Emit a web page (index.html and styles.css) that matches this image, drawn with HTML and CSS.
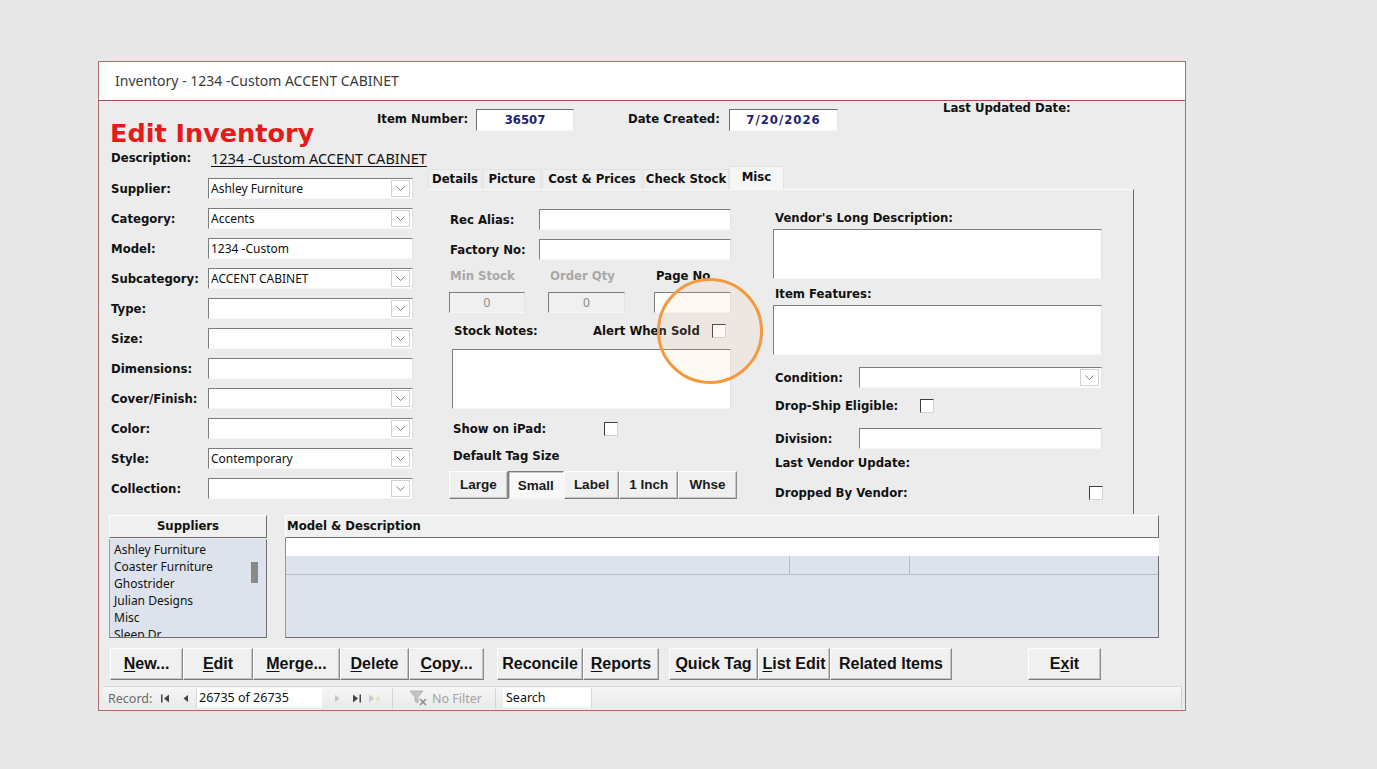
FILE: index.html
```html
<!DOCTYPE html>
<html lang="en">
<head>
  <meta charset="UTF-8" />
  <title>Inventory - 1234 -Custom ACCENT CABINET</title>
  <link rel="stylesheet" href="styles.css">
</head>
<body>
<div class="window">
  <div class="titlebar">Inventory - 1234 -Custom ACCENT CABINET</div>

  <div class="form">
    <div class="head">
      <h1 class="form-title">Edit Inventory</h1>
      <div class="head-field">
        <span class="lbl item-lbl">Item Number:</span>
        <span class="stamp item-box">36507</span>
      </div>
      <div class="head-field date-field">
        <span class="lbl date-lbl">Date Created:</span>
        <span class="stamp date-box">7/20/2026</span>
      </div>
      <div class="lbl updated">Last Updated Date:</div>
    </div>

    <div class="desc-row">
      <span class="lbl side-lbl">Description:</span>
      <span class="desc-val">1234 -Custom ACCENT CABINET</span>
    </div>

    <div class="main">
      <!-- left field column -->
      <div class="fields">
        <div class="field"><span class="lbl side-lbl">Supplier:</span><div class="input combo"><span>Ashley Furniture</span><span class="drop"><svg width="9" height="5" viewBox="0 0 9 5"><path d="M0.5 0.5 L4.5 4.5 L8.5 0.5" fill="none" stroke="#808080"/></svg></span></div></div>
        <div class="field"><span class="lbl side-lbl">Category:</span><div class="input combo"><span>Accents</span><span class="drop"><svg width="9" height="5" viewBox="0 0 9 5"><path d="M0.5 0.5 L4.5 4.5 L8.5 0.5" fill="none" stroke="#808080"/></svg></span></div></div>
        <div class="field"><span class="lbl side-lbl">Model:</span><div class="input">1234 -Custom</div></div>
        <div class="field"><span class="lbl side-lbl">Subcategory:</span><div class="input combo"><span>ACCENT CABINET</span><span class="drop"><svg width="9" height="5" viewBox="0 0 9 5"><path d="M0.5 0.5 L4.5 4.5 L8.5 0.5" fill="none" stroke="#808080"/></svg></span></div></div>
        <div class="field"><span class="lbl side-lbl">Type:</span><div class="input combo"><span></span><span class="drop"><svg width="9" height="5" viewBox="0 0 9 5"><path d="M0.5 0.5 L4.5 4.5 L8.5 0.5" fill="none" stroke="#808080"/></svg></span></div></div>
        <div class="field"><span class="lbl side-lbl">Size:</span><div class="input combo"><span></span><span class="drop"><svg width="9" height="5" viewBox="0 0 9 5"><path d="M0.5 0.5 L4.5 4.5 L8.5 0.5" fill="none" stroke="#808080"/></svg></span></div></div>
        <div class="field"><span class="lbl side-lbl">Dimensions:</span><div class="input"></div></div>
        <div class="field"><span class="lbl side-lbl">Cover/Finish:</span><div class="input combo"><span></span><span class="drop"><svg width="9" height="5" viewBox="0 0 9 5"><path d="M0.5 0.5 L4.5 4.5 L8.5 0.5" fill="none" stroke="#808080"/></svg></span></div></div>
        <div class="field"><span class="lbl side-lbl">Color:</span><div class="input combo"><span></span><span class="drop"><svg width="9" height="5" viewBox="0 0 9 5"><path d="M0.5 0.5 L4.5 4.5 L8.5 0.5" fill="none" stroke="#808080"/></svg></span></div></div>
        <div class="field"><span class="lbl side-lbl">Style:</span><div class="input combo"><span>Contemporary</span><span class="drop"><svg width="9" height="5" viewBox="0 0 9 5"><path d="M0.5 0.5 L4.5 4.5 L8.5 0.5" fill="none" stroke="#808080"/></svg></span></div></div>
        <div class="field"><span class="lbl side-lbl">Collection:</span><div class="input combo"><span></span><span class="drop"><svg width="9" height="5" viewBox="0 0 9 5"><path d="M0.5 0.5 L4.5 4.5 L8.5 0.5" fill="none" stroke="#808080"/></svg></span></div></div>
      </div>

      <!-- tab control -->
      <div class="tabs">
        <div class="tab-strip">
          <span class="tab t-details">Details</span>
          <span class="tab t-picture">Picture</span>
          <span class="tab t-cost">Cost &amp; Prices</span>
          <span class="tab t-stock">Check Stock</span>
          <span class="tab t-misc on">Misc</span>
        </div>
        <div class="tab-panel">
          <div class="col-left">
            <div class="prow"><span class="lbl plbl">Rec Alias:</span><div class="input wide"></div></div>
            <div class="prow factory"><span class="lbl plbl">Factory No:</span><div class="input wide"></div></div>
            <div class="trio trio-lbls">
              <span class="lbl muted c1">Min Stock</span>
              <span class="lbl muted c2">Order Qty</span>
              <span class="lbl c3">Page No</span>
            </div>
            <div class="trio trio-inputs">
              <div class="input small off">0</div>
              <div class="input small off">0</div>
              <div class="input small"></div>
            </div>
            <div class="notes-head">
              <span class="lbl notes-lbl">Stock Notes:</span>
              <span class="lbl alert-lbl">Alert When Sold</span>
              <span class="check"></span>
            </div>
            <div class="input memo notes"></div>
            <div class="ipad-row">
              <span class="lbl ipad-lbl">Show on iPad:</span>
              <span class="check"></span>
            </div>
            <div class="lbl tag-title">Default Tag Size</div>
            <div class="tag-group">
              <span class="tag-btn w59">Large</span>
              <span class="tag-btn w56 pressed">Small</span>
              <span class="tag-btn w56">Label</span>
              <span class="tag-btn w59">1 Inch</span>
              <span class="tag-btn w59">Whse</span>
            </div>
          </div>

          <div class="col-right">
            <div class="lbl rlbl">Vendor's Long Description:</div>
            <div class="input memo rmemo"></div>
            <div class="lbl rlbl features">Item Features:</div>
            <div class="input memo rmemo"></div>
            <div class="rrow condition"><span class="lbl rside">Condition:</span><div class="input combo rinput"><span></span><span class="drop"><svg width="9" height="5" viewBox="0 0 9 5"><path d="M0.5 0.5 L4.5 4.5 L8.5 0.5" fill="none" stroke="#808080"/></svg></span></div></div>
            <div class="rrow check-row dropship"><span class="lbl ship-lbl">Drop-Ship Eligible:</span><span class="check"></span></div>
            <div class="rrow division"><span class="lbl rside">Division:</span><div class="input rinput"></div></div>
            <div class="lbl rlbl vendor-upd">Last Vendor Update:</div>
            <div class="rrow check-row dropped"><span class="lbl">Dropped By Vendor:</span><span class="check"></span></div>
          </div>
        </div>
      </div>
    </div>

    <div class="lists">
      <div class="suppliers">
        <div class="sub-head">Suppliers</div>
        <div class="listbox">
          <ul class="list-items">
            <li>Ashley Furniture</li>
            <li>Coaster Furniture</li>
            <li>Ghostrider</li>
            <li>Julian Designs</li>
            <li>Misc</li>
            <li>Sleep Dr</li>
          </ul>
          <div class="vscroll"><span class="thumb"></span></div>
        </div>
      </div>
      <div class="models">
        <div class="sub-head left">Model &amp; Description</div>
        <div class="find-row"></div>
        <div class="grid">
          <div class="grid-head">
            <span class="gcol g1"></span>
            <span class="gcol g2"></span>
            <span class="gcol g3"></span>
          </div>
        </div>
      </div>
    </div>

    <div class="actions">
      <span class="btn b-new"><u>N</u>ew...</span>
      <span class="btn b-edit"><u>E</u>dit</span>
      <span class="btn b-merge"><u>M</u>erge...</span>
      <span class="btn b-delete"><u>D</u>elete</span>
      <span class="btn b-copy"><u>C</u>opy...</span>
      <span class="btn b-reconcile">Reconcile</span>
      <span class="btn b-reports"><u>R</u>eports</span>
      <span class="btn b-quick"><u>Q</u>uick Tag</span>
      <span class="btn b-list"><u>L</u>ist Edit</span>
      <span class="btn b-related">Related Items</span>
      <span class="btn b-exit">E<u>x</u>it</span>
    </div>
  </div>

  <div class="navbar">
    <span class="nav-lbl">Record:</span>
    <svg class="nav-first" width="10" height="9" viewBox="0 0 10 9"><rect x="0" y="0.5" width="1.5" height="8" fill="#444"/><path d="M8 0.5 L3 4.5 L8 8.5 Z" fill="#444"/></svg>
    <svg class="nav-prev" width="7" height="9" viewBox="0 0 7 9"><path d="M6 1 L1.5 4.5 L6 8 Z" fill="#444"/></svg>
    <span class="nav-box">26735 of 26735</span>
    <svg class="nav-next" width="7" height="9" viewBox="0 0 7 9"><path d="M1 1 L5.5 4.5 L1 8 Z" fill="#c2c2c2"/></svg>
    <svg class="nav-last" width="10" height="9" viewBox="0 0 10 9"><path d="M1 0.5 L6 4.5 L1 8.5 Z" fill="#444"/><rect x="7.5" y="0.5" width="1.5" height="8" fill="#444"/></svg>
    <svg class="nav-new" width="13" height="9" viewBox="0 0 13 9"><path d="M1 0.5 L6 4.5 L1 8.5 Z" fill="#c8c8c8"/><path d="M10 2 L10.7 3.8 L12.5 4 L11.1 5.1 L11.6 7 L10 6 L8.4 7 L8.9 5.1 L7.5 4 L9.3 3.8 Z" fill="#e6d8a8"/></svg>
    <span class="nav-sep"></span>
    <svg class="nav-filter-ico" width="20" height="16" viewBox="0 0 20 16"><path d="M1 1 H14 L9 7 V13 L6 11 V7 Z" fill="#c4c4c4" stroke="#a8a8a8" stroke-width="0.8"/><path d="M11 9 L17 15 M17 9 L11 15" stroke="#8a8a8a" stroke-width="1.6"/></svg>
    <span class="nav-filter">No Filter</span>
    <span class="nav-sep second"></span>
    <span class="nav-search">Search</span>
  </div>

  <div class="highlight"></div>
</div>
</body>
</html>
```

FILE: styles.css
```css
* { box-sizing: border-box; }

body {
  margin: 0;
  background: #e8e8e8;
  font-family: "DejaVu Sans", Verdana, sans-serif;
  color: #111;
}

.window {
  position: relative;
  width: 1088px;
  height: 650px;
  margin: 61px 0 0 98px;
  border: 1px solid #b06a6a;
  background: #ececec;
}

.titlebar {
  height: 39px;
  padding-left: 16px;
  line-height: 38px;
  background: #fff;
  border-bottom: 1px solid #a55252;
  font-family: "Noto Sans", "Open Sans", sans-serif;
  font-size: 14px;
  color: #3a3a3a;
}

.form {
  height: 585px;
  padding-left: 10px;
}

.lbl {
  font-weight: bold;
  font-size: 11.7px;
  white-space: nowrap;
  color: #111;
}
.lbl.muted { color: #a8a8a8; }

/* header */
.head {
  display: flex;
  align-items: flex-start;
  height: 49px;
}
.form-title {
  width: 267px;
  margin: 17px 0 0 1px;
  font-size: 25.5px;
  line-height: 30px;
  font-weight: bold;
  color: #e41b1b;
}
.head-field {
  display: flex;
  margin-top: 8px;
}
.head-field .lbl { line-height: 20px; }
.item-lbl { width: 99px; }
.date-field { margin-left: 54px; }
.date-lbl { width: 101px; }
.stamp {
  height: 22px;
  background: #fff;
  border: 1px solid;
  border-color: #6f6f6f #e4e4e4 #f6f6f6 #6f6f6f;
  text-align: center;
  font-weight: bold;
  font-size: 11.7px;
  line-height: 20px;
  color: #1c1f78;
}
.item-box { width: 98px; }
.date-box { width: 109px; letter-spacing: 1px; }
.updated {
  margin-left: 105px;
  line-height: 14px;
}

.desc-row {
  display: flex;
  align-items: center;
  height: 16px;
}
.side-lbl {
  width: 99px;
  padding-left: 2px;
}
.desc-val {
  padding-left: 3px;
  font-family: "Noto Sans", sans-serif;
  font-size: 14.5px;
  line-height: 16px;
  text-decoration: underline;
  text-underline-offset: 2px;
}

/* main area */
.main {
  display: flex;
  height: 348px;
}
.fields {
  width: 319px;
  padding-top: 12px;
  display: flex;
  flex-direction: column;
  gap: 9px;
}
.field {
  display: flex;
  align-items: center;
  height: 21px;
}

.input {
  width: 205px;
  height: 21px;
  padding-left: 2px;
  background: #fff;
  border: 1px solid;
  border-color: #7d7d7d #e2e2e2 #f7f7f7 #7d7d7d;
  font-family: "Noto Sans", sans-serif;
  font-size: 12px;
  line-height: 19px;
  color: #111;
  white-space: nowrap;
}
.combo {
  display: flex;
  justify-content: space-between;
  align-items: center;
}
.drop {
  width: 19px;
  height: 17px;
  margin-right: 2px;
  border: 1px solid #d2d2d2;
  background: #fff;
  display: flex;
  align-items: center;
  justify-content: center;
}

.check {
  width: 14px;
  height: 14px;
  background: #fff;
  border: 1px solid;
  border-color: #3c3c3c #d4d4d4 #d4d4d4 #3c3c3c;
}

/* tabs */
.tabs {
  width: 706px;
  display: flex;
  flex-direction: column;
}
.tab-strip {
  height: 23px;
  display: flex;
  align-items: flex-end;
  gap: 1px;
}
.tab {
  height: 20px;
  line-height: 19px;
  text-align: center;
  font-weight: bold;
  font-size: 11.7px;
  white-space: nowrap;
  background: #efefef;
  border: 1px solid #e3e3e3;
  border-bottom: none;
}
.tab.on {
  height: 23px;
  line-height: 20px;
  background: #f6f6f6;
}
.t-details { width: 54px; }
.t-picture { width: 58px; }
.t-cost { width: 100px; }
.t-stock { width: 86px; }
.t-misc { width: 55px; margin-left: -1px; }

.tab-panel {
  height: 325px;
  display: flex;
  padding-left: 21px;
  border-top: 1px solid #fbfbfb;
  border-right: 1px solid #6e6e6e;
}

.col-left {
  width: 288px;
  padding-top: 19px;
  display: flex;
  flex-direction: column;
}
.prow {
  display: flex;
  align-items: center;
  height: 21px;
}
.prow.factory { margin-top: 9px; }
.plbl { width: 90px; padding-left: 1px; }
.input.wide { width: 192px; }

.trio { display: flex; }
.trio-lbls {
  margin-top: 8px;
  height: 16px;
  line-height: 16px;
}
.trio-lbls .c1 { width: 99px; padding-left: 1px; }
.trio-lbls .c2 { width: 106px; padding-left: 2px; }
.trio-lbls .c3 { padding-left: 2px; }
.trio-inputs { margin-top: 8px; }
.input.small { width: 76px; text-align: center; padding-left: 0; }
.trio-inputs .input:nth-child(1) { margin-right: 23px; }
.trio-inputs .input:nth-child(2) { width: 77px; margin-right: 29px; }
.trio-inputs .input:nth-child(3) { width: 77px; }
.input.off { background: #f0f0f0; color: #8a8a8a; }

.notes-head {
  display: flex;
  align-items: center;
  height: 18px;
  margin-top: 9px;
}
.notes-lbl { width: 144px; padding-left: 5px; }
.alert-lbl { width: 119px; }

.input.memo { height: 60px; }
.notes { width: 279px; margin: 9px 0 0 3px; }

.ipad-row {
  display: flex;
  align-items: center;
  height: 18px;
  margin-top: 11px;
}
.ipad-lbl { width: 155px; padding-left: 4px; }
.tag-title {
  margin-top: 10px;
  height: 16px;
  line-height: 16px;
  padding-left: 4px;
}

.tag-group {
  display: flex;
  margin-top: 7px;
  height: 28px;
}
.tag-btn {
  height: 28px;
  text-align: center;
  line-height: 25px;
  font-family: "Liberation Sans", Arial, sans-serif;
  font-weight: bold;
  font-size: 13.5px;
  color: #1a1a1a;
  background: #f0f0f0;
  border: 1px solid;
  border-color: #fdfdfd #8c8c8c #7c7c7c #fdfdfd;
  box-shadow: inset -1px -1px 0 #c6c6c6;
}
.tag-btn.pressed {
  background: #f8f8f8;
  border-color: #7c7c7c #f4f4f4 #f4f4f4 #7c7c7c;
  box-shadow: inset 1px 1px 0 #c6c6c6;
  line-height: 28px;
}
.w56 { width: 56px; }
.w59 { width: 59px; }

.col-right {
  width: 330px;
  margin-left: 36px;
  padding-top: 20px;
  display: flex;
  flex-direction: column;
}
.rlbl {
  height: 16px;
  line-height: 16px;
  padding-left: 2px;
}
.rlbl.features { margin-top: 7px; }
.input.rmemo { width: 329px; height: 50px; margin-top: 3px; }
.rrow {
  display: flex;
  align-items: center;
  height: 21px;
}
.rrow .lbl { padding-left: 2px; }
.rside { width: 86px; }
.input.rinput { width: 243px; }
.rrow.condition { margin-top: 12px; }
.rrow.check-row { height: 18px; }
.rrow.dropship { margin-top: 9px; }
.ship-lbl { width: 147px; }
.rrow.division { margin-top: 13px; }
.rlbl.vendor-upd { margin-top: 6px; }
.rrow.dropped {
  margin-top: 13px;
  width: 330px;
  justify-content: space-between;
}

/* supplier list + model grid */
.lists {
  display: flex;
  gap: 18px;
  margin-top: 1px;
}
.suppliers { width: 158px; }
.models { width: 874px; }
.sub-head {
  height: 23px;
  background: #f0f0f0;
  border: 1px solid;
  border-color: #fdfdfd #6f6f6f #6f6f6f #fdfdfd;
  text-align: center;
  font-weight: bold;
  font-size: 11.7px;
  line-height: 21px;
}
.sub-head.left { text-align: left; padding-left: 1px; }

.listbox {
  display: flex;
  height: 99px;
  margin-top: 1px;
  background: #dde3ec;
  border: 1px solid;
  border-color: #dde3ec #6f6f6f #6f6f6f #9a9a9a;
  overflow: hidden;
}
.list-items {
  flex: 1;
  margin: 0;
  padding: 1px 0 0 4px;
  list-style: none;
  font-family: "Noto Sans", sans-serif;
  font-size: 12px;
  line-height: 17px;
  color: #111;
}
.vscroll { width: 19px; }
.thumb {
  display: block;
  width: 7px;
  height: 21px;
  margin: 22px 0 0 4px;
  background: #8a8a8a;
}

.find-row {
  height: 18px;
  background: #fff;
  border-left: 1px solid #8a8a8a;
}
.grid {
  height: 82px;
  background: #dde3ec;
  border: 1px solid;
  border-top: none;
  border-color: #6f6f6f #6f6f6f #6f6f6f #9a9a9a;
}
.grid-head {
  display: flex;
  height: 19px;
  border-bottom: 1px solid #b7bcc5;
}
.gcol { height: 18px; }
.g1 { width: 504px; border-right: 1px solid #b7bcc5; }
.g2 { width: 120px; border-right: 1px solid #b7bcc5; }

/* command buttons */
.actions {
  display: flex;
  margin-top: 10px;
  padding-left: 1px;
  height: 32px;
}
.btn {
  height: 32px;
  text-align: center;
  line-height: 29px;
  font-family: "Liberation Sans", Arial, sans-serif;
  font-weight: bold;
  font-size: 16px;
  color: #111;
  background: #f0f0f0;
  border: 1px solid;
  border-color: #fdfdfd #8c8c8c #7a7a7a #fdfdfd;
  box-shadow: inset -1px -1px 0 #c4c4c4;
  white-space: nowrap;
}
.btn u { text-underline-offset: 2px; }
.b-new { width: 73px; }
.b-edit { width: 70px; }
.b-merge { width: 87px; }
.b-delete { width: 69px; }
.b-copy { width: 75px; }
.b-reconcile { width: 86px; margin-left: 13px; }
.b-reports { width: 76px; }
.b-quick { width: 89px; margin-left: 10px; }
.b-list { width: 72px; }
.b-related { width: 122px; }
.b-exit { width: 73px; margin-left: 76px; }

/* record navigation bar */
.navbar {
  display: flex;
  align-items: center;
  height: 23px;
  margin: 0 3px 0 4px;
  background: linear-gradient(#f6f6f6, #e9e9e9);
  border-top: 1px solid #d8d8d8;
  border-right: 1px solid #d0d0d0;
  font-family: "Noto Sans", sans-serif;
  font-size: 12.5px;
  color: #6a6a6a;
}
.nav-lbl { width: 58px; padding-left: 5px; }
.nav-prev { margin-left: 11px; }
.nav-box {
  width: 126px;
  height: 20px;
  margin-left: 7px;
  padding-left: 2px;
  line-height: 19px;
  background: #fff;
  color: #111;
  border-left: 1px solid #d8d8d8;
}
.nav-next { margin-left: 12px; }
.nav-last { margin-left: 11px; }
.nav-new { margin-left: 6px; }
.nav-sep {
  width: 1px;
  height: 20px;
  margin-left: 11px;
  background: #d4d4d4;
}
.nav-filter-ico { margin-left: 16px; }
.nav-filter { margin-left: 3px; color: #a4a4a4; }
.nav-sep.second { margin-left: 13px; }
.nav-search {
  width: 89px;
  height: 20px;
  margin-left: 7px;
  padding-left: 3px;
  line-height: 19px;
  background: #fff;
  color: #111;
  border-right: 1px solid #d8d8d8;
}

/* annotation ring drawn over the form */
.highlight {
  position: absolute;
  left: 558px;
  top: 216px;
  width: 106px;
  height: 106px;
  border: 3px solid #f49a3e;
  border-radius: 50%;
  background: rgba(255, 200, 150, 0.12);
}
```
